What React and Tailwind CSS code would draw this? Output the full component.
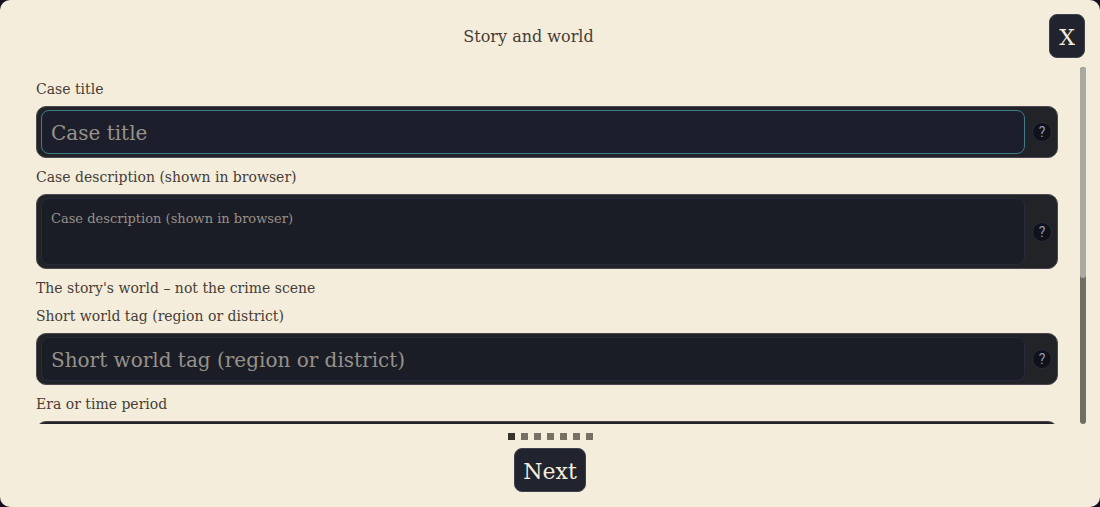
import React, { useState } from 'react';

const fields = [
  { name: 'title', label: 'Case title' },
  { name: 'description', label: 'Case description (shown in browser)', multiline: true },
  { name: 'worldTag', label: 'Short world tag (region or district)', heading: "The story's world – not the crime scene" },
  { name: 'era', label: 'Era or time period' },
];

const STEPS = 7;

const Field = ({ field, value, active, onChange, onFocus }) => {
  const border = active ? 'border-[#3f7d8a] bg-[#1d1e2b]' : 'border-[#262a3c] bg-[#1b1d26]';
  const box = `block min-w-0 flex-1 resize-none rounded-lg border px-[9px] text-[#96928a] placeholder:text-[#96928a] placeholder:opacity-100 focus:outline-none ${border}`;

  return (
    <div>
      {field.heading && <h2 className="mt-[5px] mb-[-5px] text-sm leading-7">{field.heading}</h2>}
      <label htmlFor={field.name} className="mt-[5px] mb-[3px] block text-sm leading-7">{field.label}</label>
      <div className="flex items-center rounded-[10px] border border-[#4b4852] bg-[#222327] py-[3px] pr-[5px] pl-1">
        {field.multiline ? (
          <textarea id={field.name} name={field.name} placeholder={field.label} value={value} onChange={onChange} onFocus={onFocus} className={`${box} h-[67px] py-2 text-[13px] leading-6`} />
        ) : (
          <input id={field.name} name={field.name} placeholder={field.label} value={value} onChange={onChange} onFocus={onFocus} className={`${box} h-11 pt-0.5 text-xl`} />
        )}
        <button type="button" aria-label={`Help: ${field.label}`} className="ml-[7px] h-5 w-5 shrink-0 rounded-full border border-[#292b3f] bg-[#10121b] font-['Roboto',sans-serif] text-sm leading-[18px] text-[#9296b8]">
          ?
        </button>
      </div>
    </div>
  );
};

const App = () => {
  const [formData, setFormData] = useState({ title: '', description: '', worldTag: '', era: '' });
  const [active, setActive] = useState('title');
  const [step, setStep] = useState(0);

  const handleChange = (e) => {
    setFormData({ ...formData, [e.target.name]: e.target.value });
  };

  return (
    <div className="h-screen bg-[#14101f]">
      <div className="flex h-full flex-col rounded-[10px] bg-[#f5eddc] font-['DejaVu_Serif',serif] text-[#453d36]">
        <header className="flex h-[67px] shrink-0 items-center gap-[7px] px-[15px] pt-[5px]">
          <h1 className="flex-1 pt-0.5 text-center text-base">Story and world</h1>
          <button type="button" aria-label="Close" className="h-11 w-9 rounded-lg border border-[#3f404c] bg-[#21242e] pt-0.5 text-[22px] text-[#f5eddc]">
            X
          </button>
        </header>

        <div className="flex min-h-0 flex-1 pr-[14px] pl-9">
          <form className="min-w-0 flex-1 overflow-y-auto pt-[3px] [scrollbar-width:none]">
            {fields.map((field) => (
              <Field
                key={field.name}
                field={field}
                value={formData[field.name]}
                active={active === field.name}
                onChange={handleChange}
                onFocus={() => setActive(field.name)}
              />
            ))}
          </form>
          <div className="ml-[22px] w-1.5 shrink-0 overflow-hidden rounded-full bg-[#716d63]">
            <div className="h-[59%] rounded-full bg-[#aaa9a4]" />
          </div>
        </div>

        <footer className="flex shrink-0 flex-col items-center gap-2 pt-[9px] pb-[15px]">
          <div className="flex gap-1.5">
            {Array.from({ length: STEPS }, (_, i) => (
              <span key={i} className={`h-[7px] w-[7px] ${i === step ? 'bg-[#36322d]' : 'bg-[#777064]'}`} />
            ))}
          </div>
          <button type="button" onClick={() => setStep(Math.min(step + 1, STEPS - 1))} className="h-11 rounded-lg border border-[#3f404c] bg-[#21242e] px-2 pt-0.5 text-[22px] text-[#f5eddc]">
            Next
          </button>
        </footer>
      </div>
    </div>
  );
};

export default App;
